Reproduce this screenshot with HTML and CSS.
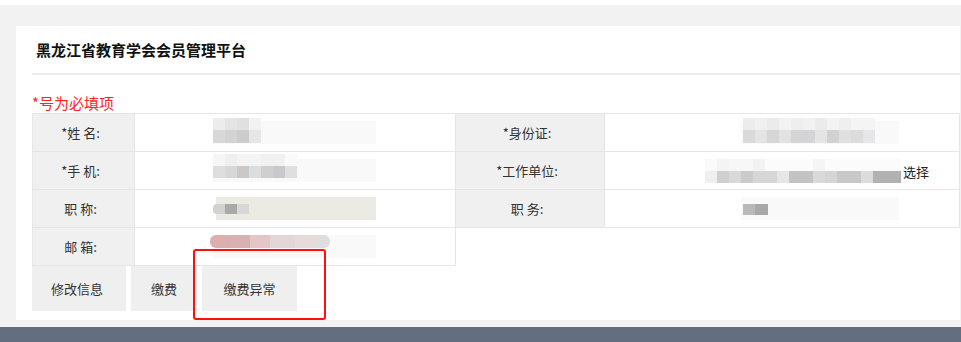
FILE: index.html
```html
<!DOCTYPE html>
<html lang="zh-CN">
  <head>
    <meta charset="UTF-8" />
    <meta name="viewport" content="width=device-width, initial-scale=1.0" />
    <title>会员信息</title>

    <link rel="stylesheet" href="styles.css">
  </head>
  <body>
    <div class="panel">
      <div class="card">
        <h1 class="title">黑龙江省教育学会会员管理平台</h1>
        <p class="note">*号为必填项</p>

        <table class="info">
          <colgroup>
            <col class="c-label" />
            <col class="c-value" />
            <col class="c-label2" />
            <col />
          </colgroup>
          <tr>
            <td class="label">*姓 名:</td>
            <td class="value">
              <div class="field f-left">
                <div class="blur blur-name"></div>
              </div>
            </td>
            <td class="label">*身份证:</td>
            <td class="value">
              <div class="field f-right">
                <div class="blur blur-id"></div>
              </div>
            </td>
          </tr>
          <tr>
            <td class="label">*手 机:</td>
            <td class="value">
              <div class="field f-left">
                <div class="blur blur-phone"></div>
              </div>
            </td>
            <td class="label">*工作单位:</td>
            <td class="value">
              <div class="unit">
                <div class="blur-unit"></div>
                <span class="pick">选择</span>
              </div>
            </td>
          </tr>
          <tr>
            <td class="label">职 称:</td>
            <td class="value">
              <div class="field f-left beige">
                <div class="blur blur-title"></div>
              </div>
            </td>
            <td class="label">职 务:</td>
            <td class="value">
              <div class="field f-right">
                <div class="blur blur-post"></div>
              </div>
            </td>
          </tr>
          <tr>
            <td class="label">邮 箱:</td>
            <td class="value">
              <div class="field f-left">
                <div class="blur blur-mail"></div>
              </div>
            </td>
          </tr>
        </table>

        <div class="actions">
          <div class="btn btn-edit">修改信息</div>
          <div class="btn btn-pay">缴费</div>
          <div class="btn btn-err">缴费异常</div>
        </div>
      </div>
    </div>
    <div class="footer"></div>

    <!-- red highlight drawn over the page -->
    <div class="mark"></div>
  </body>
</html>
```

FILE: styles.css
```css
* {
  box-sizing: border-box;
  font-family: "Noto Sans CJK SC", "Liberation Sans", sans-serif;
}

body {
  margin: 0;
  padding-top: 5px;
  background-color: #fff;
  color: #333;
  position: relative;
}

.panel {
  background-color: #f2f2f2;
  padding: 21px 1px 7px 16px;
}

.card {
  background-color: #fff;
  padding: 0 0 9px 16px;
}

.title {
  margin: 0;
  height: 49px;
  line-height: 47px;
  padding-left: 4px;
  font-size: 15px;
  font-weight: bold;
  color: #111;
  border-bottom: 2px solid #ececec;
}

.note {
  margin: 18px 0 0;
  height: 20px;
  line-height: 20px;
  font-size: 15px;
  color: #ff2424;
}

.info {
  width: 100%;
  border-collapse: collapse;
  table-layout: fixed;
}

.c-label {
  width: 102px;
}
.c-value {
  width: 321px;
}
.c-label2 {
  width: 149px;
}

.info tr {
  height: 38px;
}

.info td {
  border: 1px solid #e6e6e6;
  padding: 0;
  font-size: 13px;
}

.label {
  background-color: #f0f0f0;
  text-align: center;
  padding-right: 6px !important;
}

.value {
  background-color: #fff;
}

.field {
  position: relative;
  height: 23px;
  background-color: #f9f9f9;
}

.f-left {
  margin-left: 78px;
  width: 163px;
}

.f-right {
  margin-left: 136px;
  width: 158px;
}

.beige {
  margin-left: 81px;
  width: 160px;
  background-color: #ebeae3;
}

.blur {
  position: absolute;
}

.blur-name {
  left: 0;
  top: -3px;
  width: 48px;
  height: 25px;
  background:
    linear-gradient(to right, #ececec 0 12px, #e4e4e4 12px 24px, #e0e0e0 24px 36px, #f2f2f2 36px) top / 100% 12px no-repeat,
    linear-gradient(to right, #d8d8d8 0 12px, #d3d3d3 12px 24px, #cccccc 24px 36px, #e6e6ea 36px) bottom / 100% 13px no-repeat;
}

.blur-phone {
  left: 0;
  top: -5px;
  width: 84px;
  height: 24px;
  background:
    linear-gradient(to right, #f6f6f6 0 12px, #efefef 12px 24px, #f4f4f4 24px 48px, #f1f1f1 48px 72px, #fafafa 72px) top / 100% 12px no-repeat,
    linear-gradient(to right, #dedede 0 12px, #d7d7d9 12px 24px, #cdc8c8 24px 36px, #dcdde0 36px 48px, #d0cfd0 48px 60px, #cbc8cd 60px 72px, #dfdfe1 72px) bottom / 100% 12px no-repeat;
}

.blur-title {
  left: -3px;
  top: 7px;
  width: 36px;
  height: 10px;
  border-radius: 4px 0 0 4px;
  background: linear-gradient(to right, #d2d2d2 0 12px, #a9a9a6 12px 24px, #d8d8d6 24px);
}

.blur-mail {
  left: -3px;
  top: 0;
  width: 120px;
  height: 13px;
  border-radius: 6px;
  background: linear-gradient(to right, #dcaeae 0 20px, #d9b1b1 20px 40px, #e4c6c6 40px 60px, #e2d6d6 60px 85px, #e6dada 85px 105px, #dedede 105px);
}

.blur-id {
  left: 2px;
  top: -3px;
  width: 132px;
  height: 25px;
  background:
    linear-gradient(to right, #ececec 0 12px, #f0f0f0 12px 24px, #ebebeb 24px 36px, #f2f2f2 36px 48px, #eeeeee 48px 60px, #f1f1f1 60px 72px, #ebebeb 72px 84px, #f3f3f3 84px 96px, #efefef 96px 108px, #f4f4f4 108px) top / 100% 12px no-repeat,
    linear-gradient(to right, #dadada 0 12px, #e4e4e4 12px 24px, #d6d6d6 24px 36px, #e2e2e2 36px 48px, #d6d4d4 48px 60px, #d4d4d6 60px 72px, #e4e4e4 72px 84px, #d4d2d0 84px 96px, #e0e0e0 96px 108px, #dcdcdc 108px 120px, #e6e6ea 120px) bottom / 100% 13px no-repeat;
}

.blur-post {
  left: 2px;
  top: 7px;
  width: 25px;
  height: 11px;
  background: linear-gradient(to right, #b8b8b8 0 12px, #a8a8a8 12px);
}

.unit {
  display: flex;
  align-items: center;
  margin-left: 100px;
}

.blur-unit {
  width: 196px;
  height: 24px;
  background:
    linear-gradient(to right, #fafafa 0 12px, #f4f4f4 12px 24px, #f7f7f7 24px 48px, #f2f2f2 48px 60px, #fbfbfb 60px 108px, #f5f5f5 108px 120px, #fbfbfb 120px) top / 100% 12px no-repeat,
    linear-gradient(to right, #efefef 0 12px, #cfcfcf 12px 24px, #d9d9d9 24px 36px, #cbcbcb 36px 48px, #d6d6d6 48px 72px, #e6e6e6 72px 84px, #c3c3c3 84px 108px, #d9d9dc 108px 120px, #d5d5d5 120px 132px, #c8c8c8 132px 156px, #dcdcdc 156px 168px, #b1b1b1 168px) bottom / 100% 12px no-repeat;
}

.pick {
  margin-left: 2px;
  font-size: 13px;
  color: #222;
  padding-top: 2px;
}

.actions {
  display: flex;
  gap: 5px;
}

.btn {
  display: flex;
  align-items: center;
  justify-content: center;
  height: 45px;
  background-color: #efefef;
  font-size: 13px;
  color: #333;
}

.btn-edit {
  width: 94px;
  padding-right: 4px;
}
.btn-pay {
  width: 66px;
}
.btn-err {
  width: 95px;
}

.footer {
  height: 16px;
  background-color: #636f7f;
}

.mark {
  position: absolute;
  left: 193px;
  top: 249px;
  width: 133px;
  height: 71px;
  border: 2px solid #ff1010;
  border-radius: 3px;
}
```
